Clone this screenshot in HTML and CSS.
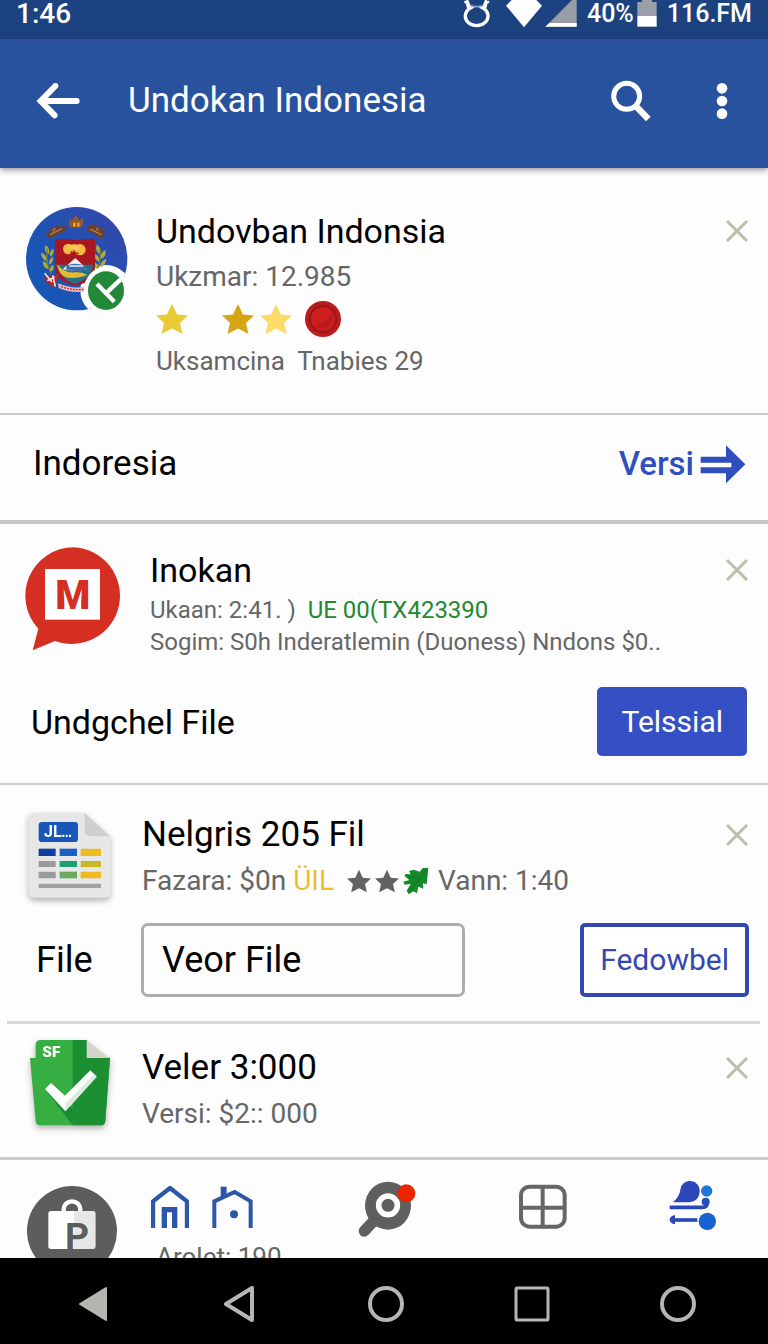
FILE: index.html
```html
<!DOCTYPE html>
<html lang="id">
<head>
    <meta charset="UTF-8">
    <meta name="viewport" content="width=device-width, initial-scale=1.0">
    <title>Undokan Indonesia</title>
    <link rel="stylesheet" href="styles.css">
</head>
<body>

    <svg width="0" height="0" class="defs" aria-hidden="true">
        <symbol id="star" viewBox="0 0 32 30">
            <path d="M16 0l5 10.500 11 1-8 7.500 2.500 11-10.500-5.500-10.500 5.500 2.500-11-8-7.500 11-1z"/>
        </symbol>
        <symbol id="close" viewBox="0 0 24 24">
            <path d="M2 2l20 20M22 2L2 22" fill="none" stroke="#bdbda9" stroke-width="3"/>
        </symbol>
    </svg>

    <div class="status-bar">
        <span class="clock">1:46</span>
        <div class="status-icons">
            <svg width="28" height="28" viewBox="76 0 84 84">
                <path d="M80 4l14 10-6-14M154 4l-14 10 6-14" fill="none" stroke="#fff" stroke-width="7"/>
                <path d="M92 14q25 12 50 0" fill="none" stroke="#8fa6cc" stroke-width="5"/>
                <path d="M90 12q0 10 8 12a34 29 0 1 0 38 0q8-2 8-12" fill="none" stroke="#fff" stroke-width="10"/>
            </svg>
            <svg width="36" height="28" viewBox="203 0 108 84"><path d="M220 0h74l17 17-54 65-54-65z" fill="#fff"/></svg>
            <svg width="32" height="28" viewBox="316 0 96 84">
                <path d="M411 0v80h-94l80-80z" fill="#989ca4"/>
                <path d="M329 69h82v11h-94z" fill="#fff"/>
            </svg>
            <span class="status-text">40%</span>
            <svg width="20" height="28" viewBox="594 0 60 84">
                <path d="M595 6h14V0h30v6h14v42h-58z" fill="#9a9ea8"/>
                <path d="M595 48h58v32h-58z" fill="#fff"/>
            </svg>
            <span class="status-text">116.FM</span>
        </div>
    </div>

    <header class="app-bar">
        <button class="icon-btn" aria-label="Back">
            <svg width="44" height="36" viewBox="110 244 132 108">
                <path d="M168 253l-44 45 42 43M124 298h108" fill="none" stroke="#fff" stroke-width="18" stroke-linecap="round"/>
            </svg>
        </button>
        <h1>Undokan Indonesia</h1>
        <button class="icon-btn" aria-label="Search">
            <svg width="40" height="42" viewBox="512 238 120 126">
                <circle cx="559" cy="287" r="39" fill="none" stroke="#fff" stroke-width="15"/>
                <path d="M584 314l40 41" stroke="#fff" stroke-width="19"/>
            </svg>
        </button>
        <button class="icon-btn" aria-label="More">
            <svg width="12" height="36" viewBox="828 240 36 108" fill="#fff">
                <circle cx="846" cy="256" r="16"/>
                <circle cx="846" cy="294" r="16"/>
                <circle cx="846" cy="332" r="16"/>
            </svg>
        </button>
    </header>

    <main>
        <section class="item item-profile">
            <svg class="media" width="102" height="104" viewBox="50 35 306 312">
                <defs>
                    <linearGradient id="sky" x1="0" y1="1" x2="1" y2="0">
                        <stop offset="0" stop-color="#1459b5"/>
                        <stop offset="0.500" stop-color="#1f52b4"/>
                        <stop offset="1" stop-color="#3b44a8"/>
                    </linearGradient>
                    <clipPath id="disc"><ellipse cx="202" cy="190" rx="152" ry="155"/></clipPath>
                </defs>
                <g clip-path="url(#disc)">
                    <rect x="50" y="35" width="306" height="312" fill="url(#sky)"/>
                    <circle cx="290" cy="286" r="77" fill="#fff"/>
                </g>
                <path d="M178 68l10 8 12-18 10 18 12-8-4 28h-36z" fill="#9b5a20"/>
                <path d="M192 82h6v12h-6zM204 82h6v12h-6z" fill="#f1b04a"/>
                <path d="M106 108l12 6 2-22 10 12 14-18 6 10 18-6 2 16-16 6-34 18z" fill="#6b3f2c"/>
                <path d="M122 118l36-18M130 108l8-10" stroke="#b98138" stroke-width="4"/>
                <path d="M293 108l-10 8-4-24-10 10-14-18-6 8-16-4-2 18 18 6 26 18z" fill="#6b3f2c"/>
                <path d="M276 118l-32-16M268 106l-8-8" stroke="#b98138" stroke-width="4"/>
                <g fill="#b3a83c">
                    <path d="M108 150q16 8 10 26-16-8-10-26zM96 172q18 6 16 26-18-8-16-26zM100 198q18 4 18 24-18-4-18-24zM132 160q4 18-10 24-4-16 10-24zM130 184q4 18-10 24-4-16 10-24zM132 208q4 18-10 22-4-14 10-22z"/>
                    <path d="M262 148q16 8 8 28-14-10-8-28zM288 164q4 20-14 28-4-18 14-28zM290 190q2 18-16 26-4-16 16-26zM258 176q14 8 12 24-16-6-12-24zM256 202q14 4 12 22-14-4-12-22z"/>
                </g>
                <path d="M114 160q-6 44 12 76M272 160q4 30-6 60" fill="none" stroke="#6f8438" stroke-width="4"/>
                <path d="M137 131q33 0 60 3 27-3 60-3v86q0 42-60 54-60-16-60-54z" fill="#a8161f"/>
                <path d="M140 208h112q-4 40-54 58-46-14-58-58z" fill="#23708a"/>
                <circle cx="177" cy="161" r="16" fill="#f5b944"/>
                <circle cx="212" cy="163" r="17" fill="#f5b944"/>
                <ellipse cx="195" cy="155" rx="16" ry="8" fill="#f8c857"/>
                <path d="M184 176q12-10 24 0M186 168q-4 10 10 10" stroke="#a8161f" stroke-width="4" fill="none"/>
                <path d="M160 222q16-14 38-34 20 18 34 34-36 8-72 0z" fill="#f4f2ef"/>
                <path d="M172 210q24-10 54 0l10 12q-36 10-66 0z" fill="#3b6dae"/>
                <path d="M180 212h42" stroke="#fff" stroke-width="4"/>
                <path d="M144 207q20 28 54 24 22-2 36 8-40 14-66 6-20-8-24-38z" fill="#e8ba32"/>
                <path d="M108 236q16 10 26 6l16-10-4 20-12 26-24-18z" fill="#b3242b"/>
                <path d="M106 234l22 26M114 256l22-10M130 240l8 34" stroke="#f3e8e8" stroke-width="5"/>
                <path d="M146 264q40 18 84 10v14q-46 6-82-10z" fill="#e7b4b8"/>
                <path d="M156 274q34 12 70 8" fill="none" stroke="#b3242b" stroke-width="4" stroke-dasharray="5 4"/>
                <ellipse cx="290" cy="286" rx="67" ry="72" fill="#fff"/>
                <ellipse cx="290" cy="286" rx="54" ry="58" fill="#23883a"/>
                <path d="M263 266l52 53M292 292l42-40" stroke="#fff" stroke-width="13"/>
            </svg>
            <div class="info">
                <h2>Undovban Indonsia</h2>
                <p>Ukzmar: 12.985</p>
                <div class="rating">
                    <svg class="first-star" width="32" height="30"><use href="#star" fill="#e9c935"/></svg>
                    <svg width="32" height="30"><use href="#star" fill="#d5a514"/></svg>
                    <svg width="32" height="30"><use href="#star" fill="#fbdc6b"/></svg>
                    <svg class="seal" width="36" height="36" viewBox="0 0 36 36">
                        <circle cx="18" cy="18" r="18" fill="#b81c1c"/>
                        <circle cx="18" cy="18" r="13" fill="#cb1f20" stroke="#9f1517" stroke-width="2"/>
                        <path d="M10 25A11 11 0 0 0 27 12q-5 9-17 13z" fill="#b91b1c"/>
                    </svg>
                </div>
                <p class="caption">Uksamcina&nbsp; Tnabies 29</p>
            </div>
            <button class="close" aria-label="Close"><svg width="24" height="24"><use href="#close"/></svg></button>
        </section>

        <section class="link-row">
            <h2>Indoresia</h2>
            <a href="#">Versi
                <svg width="46" height="38" viewBox="420 44 138 114">
                    <path d="M422 79h76V45l58 57-58 57v-30h-76v-18h92V97h-92z" fill="#2f4fc0"/>
                </svg>
            </a>
        </section>

        <section class="item item-message">
            <svg class="media" width="98" height="106" viewBox="72 48 294 318">
                <path d="M220 52a145 145 0 1 1-55 281l-67 28 17-65A145 145 0 0 1 220 52z" fill="#d42f22"/>
                <rect x="135" y="117" width="165" height="152" fill="#fff"/>
                <text x="218" y="238" class="mark-m" text-anchor="middle">M</text>
            </svg>
            <div class="info">
                <h2>Inokan</h2>
                <p class="small">Ukaan: 2:41. )&nbsp; <span class="green">UE 00(TX423390</span></p>
                <p class="small">Sogim: S0h Inderatlemin (Duoness) Nndons $0..</p>
            </div>
            <button class="close" aria-label="Close"><svg width="24" height="24"><use href="#close"/></svg></button>
            <div class="action-row">
                <h2>Undgchel File</h2>
                <button class="btn btn-filled">Telssial</button>
            </div>
        </section>

        <section class="item item-file">
            <svg class="media shadow" width="88" height="92" viewBox="84 60 264 276">
                <path d="M108 66h152l76 70v168q0 16-16 16H108q-16 0-16-16V82q0-16 16-16z" fill="#e7e7e8"/>
                <path d="M260 66l76 70h-60q-16 0-16-16z" fill="#cfcfcf"/>
                <rect x="122" y="93" width="118" height="60" rx="10" fill="#1857b8"/>
                <text x="138" y="139" class="mark-sheet">JL</text>
                <path d="M193 131h6v7h-6zM203 131h6v7h-6zM213 131h6v7h-6z" fill="#fff"/>
                <path d="M122 173h51v22h-51z" fill="#0c3f9f"/>
                <path d="M185 173h52v22h-52z" fill="#1c60c4"/>
                <path d="M248 173h61v22h-61zM248 242h61v20h-61z" fill="#eebb23"/>
                <path d="M122 210h51v18h-51zM122 242h51v20h-51z" fill="#9b9b9d"/>
                <path d="M185 210h52v18h-52z" fill="#1ca071"/>
                <path d="M185 242h52v20h-52z" fill="#68aa60"/>
                <path d="M248 210h61v18h-61z" fill="#cbb727"/>
                <path d="M122 278h187v13H122z" fill="#a2a2a2"/>
            </svg>
            <div class="info">
                <h2>Nelgris 205 Fil</h2>
                <div class="meta">
                    <p>Fazara: $0n <span class="yellow">ÜIL</span></p>
                    <div class="meta-icons">
                        <svg width="24" height="24"><use href="#star" fill="#626262"/></svg>
                        <svg width="24" height="24"><use href="#star" fill="#626262"/></svg>
                        <svg width="26" height="28" viewBox="194 16 78 84">
                            <path d="M270 19l-5 49-11-3 1 16-15-6-4 20-11-6-14 9-6-11 12-20-18 2-4-9 18-5-14-11 2-7 16 1-5-10 14-4 18 6 10-11z" fill="#158a2b"/>
                            <path d="M264 26L216 86M242 50l-32-6" stroke="#0f7423" stroke-width="3" fill="none"/>
                        </svg>
                    </div>
                    <p>Vann: 1:40</p>
                </div>
            </div>
            <button class="close" aria-label="Close"><svg width="24" height="24"><use href="#close"/></svg></button>
            <div class="field-row">
                <label for="file">File</label>
                <input type="text" id="file" name="file" value="Veor File">
                <button class="btn btn-outline">Fedowbel</button>
            </div>
        </section>

        <section class="item item-version">
            <svg class="media shadow" width="88" height="92" viewBox="84 108 264 276">
                <path d="M128 96h137l43 53h28l-14 189q-1 14-15 14H128q-14 0-15-14L96 150h17v-40q0-14 15-14z" fill="#37ae42"/>
                <path d="M224 96h41l43 53h28l-14 189q-1 14-15 14h-83z" fill="#1d8f33"/>
                <path d="M146 250l78 102V300z" fill="#1c8a32"/>
                <path d="M266 96l66 54h-66z" fill="#d5d3cd"/>
                <path d="M141 243l18-18 42 38 76-76 19 19-94 104z" fill="#fff"/>
                <path d="M203 286l86-88 7 8-94 104z" fill="#dcebdd"/>
                <text x="133" y="147" class="mark-sf">SF</text>
            </svg>
            <div class="info">
                <h2>Veler 3:000</h2>
                <p>Versi: $2:: 000</p>
            </div>
            <button class="close" aria-label="Close"><svg width="24" height="24"><use href="#close"/></svg></button>
        </section>
    </main>

    <nav class="tabs">
        <svg class="bag" width="90" height="90" viewBox="80 528 270 270">
            <circle cx="215" cy="663" r="135" fill="#5d5d5d"/>
            <path d="M190 606v-8a25 24 0 0 1 50 0v8" fill="none" stroke="#fff" stroke-width="13"/>
            <rect x="144" y="603" width="141" height="114" rx="8" fill="#fff"/>
            <path d="M221 603h56q8 0 8 8v98q0 8-8 8h-56z" fill="#e7e7e7"/>
            <text x="194" y="716" class="mark-p">P</text>
        </svg>
        <div class="home">
            <div class="home-icons">
                <a href="#" aria-label="Home">
                    <svg width="38" height="42" viewBox="453 530 114 126" fill="none" stroke="#2c56a8" stroke-width="13">
                        <path d="M459 656v-80l51-40 51 40v80"/>
                        <path d="M493 656v-55h31v55" stroke-width="16"/>
                    </svg>
                </a>
                <a href="#" aria-label="House">
                    <svg width="42" height="42" viewBox="636 530 126 126" fill="none" stroke="#2c56a8" stroke-width="12">
                        <path d="M643 656v-80l61-28 48 28v80"/>
                        <path d="M671 532v28" stroke-width="18"/>
                        <circle cx="702" cy="615" r="12" fill="#2c56a8" stroke="none"/>
                    </svg>
                </a>
            </div>
            <p class="caption">Arolet: 190</p>
        </div>
        <div class="tab-icons">
            <a href="#" aria-label="Find">
                <svg width="58" height="58" viewBox="53 94 174 174">
                    <path d="M100 214l-28 30" stroke="#5f5f5f" stroke-width="34" stroke-linecap="round"/>
                    <ellipse cx="143" cy="168" rx="69" ry="72" fill="#5f5f5f"/>
                    <circle cx="143" cy="167" r="28" fill="#5f5f5f" stroke="#fff" stroke-width="17"/>
                    <circle cx="198" cy="131" r="27" fill="#ea2500"/>
                </svg>
            </a>
            <a href="#" aria-label="Grid">
                <svg width="48" height="50" viewBox="531 94 144 150" fill="none" stroke="#666" stroke-width="12">
                    <rect x="537" y="111" width="131" height="120" rx="26"/>
                    <path d="M602 111v120M537 174h131"/>
                </svg>
            </a>
            <a href="#" aria-label="Account">
                <svg width="48" height="50" viewBox="988 94 144 150">
                    <path d="M1000 158q20-18 22-38a29 29 0 1 1 58 6q-2 32-40 32z" fill="#2b47b8"/>
                    <circle cx="1101" cy="124" r="17" fill="#1d78d8"/>
                    <path d="M990 173h98q14 0 14-10" fill="none" stroke="#2b47b8" stroke-width="11"/>
                    <circle cx="1098" cy="156" r="12" fill="#2450bc"/>
                    <path d="M1000 211h73" stroke="#2b47b8" stroke-width="11"/>
                    <path d="M1006 196v28q-16-4-16-14t16-14z" fill="#2b47b8"/>
                    <circle cx="1103" cy="215" r="26" fill="#1762d2"/>
                </svg>
            </a>
        </div>
    </nav>

    <footer class="system-nav">
        <button class="icon-btn" aria-label="Previous">
            <svg width="36" height="36" viewBox="0 0 36 36"><path d="M5 18L31 2v32z" fill="#b7b5b2" stroke="#b7b5b2" stroke-width="2" stroke-linejoin="round"/></svg>
        </button>
        <button class="icon-btn" aria-label="Back">
            <svg width="36" height="36" viewBox="0 0 36 36"><path d="M5 18L31 2v32z" fill="none" stroke="#b7b5b2" stroke-width="4" stroke-linejoin="round"/></svg>
        </button>
        <button class="icon-btn" aria-label="Home">
            <svg width="36" height="36" viewBox="0 0 36 36"><circle cx="18" cy="18" r="16" fill="none" stroke="#b7b5b2" stroke-width="4"/></svg>
        </button>
        <button class="icon-btn" aria-label="Recent">
            <svg width="36" height="36" viewBox="0 0 36 36"><rect x="2" y="2" width="32" height="32" rx="1" fill="none" stroke="#b7b5b2" stroke-width="3"/></svg>
        </button>
        <button class="icon-btn" aria-label="Assistant">
            <svg width="36" height="36" viewBox="0 0 36 36"><circle cx="18" cy="18" r="16" fill="none" stroke="#b7b5b2" stroke-width="4"/></svg>
        </button>
    </footer>

</body>
</html>
```

FILE: styles.css
```css
* {
    box-sizing: border-box;
}
body {
    font-family: Roboto, 'Liberation Sans', sans-serif;
    background: #fdfdfd;
    color: #000;
    display: flex;
    flex-direction: column;
    height: 100vh;
    margin: 0;
}
h1, h2, p {
    margin: 0;
    font-weight: 400;
}
h2 {
    font-size: 34px;
    line-height: 48px;
}
p {
    font-size: 28px;
    line-height: 44px;
    color: #666;
}
svg {
    display: block;
    flex: none;
}
.defs {
    position: absolute;
}
.icon-btn, .close {
    background: none;
    border: none;
    padding: 0;
    cursor: pointer;
}

/* top bars */
.status-bar {
    display: flex;
    justify-content: space-between;
    flex: none;
    padding: 0 16px 11px;
    background: #1c437f;
    color: #fff;
    font-weight: 500;
    line-height: 28px;
}
.clock {
    font-size: 28px;
}
.status-text {
    font-size: 25px;
    padding-left: 7px;
}
.status-icons {
    display: flex;
    gap: 3px;
}
.status-icons svg:first-child {
    margin-right: 12px;
}
.app-bar {
    display: flex;
    align-items: center;
    flex: none;
    padding: 38px 40px 43px 36px;
    background: #28529d;
    color: #fff;
    box-shadow: 0 2px 6px rgba(60, 40, 60, 0.5);
}
.app-bar h1 {
    flex: 1;
    margin-left: 48px;
    font-size: 35px;
    line-height: 48px;
}
.app-bar .icon-btn:last-child {
    margin-left: 65px;
}

/* list */
main {
    flex: none;
}
.item {
    display: flex;
    flex-wrap: wrap;
    align-items: flex-start;
    padding: 0 19px 0 26px;
}
.item-profile {
    padding-top: 39px;
    padding-bottom: 30px;
    border-bottom: 2px solid #c9c9c9;
}
.item-message {
    padding-top: 22px;
    padding-bottom: 27px;
    padding-left: 24px;
    border-bottom: 2px solid #cfcfcf;
}
.item-file {
    padding-top: 26px;
}
.item-file::after {
    content: "";
    flex: 0 0 calc(100% + 30px);
    height: 3px;
    margin: 24px -11px 0 -19px;
    background: #d8d8d5;
}
.item-version {
    padding-top: 20px;
    padding-bottom: 21px;
    border-bottom: 3px solid #cbcbcb;
}
.item-file h2, .item-version h2, .link-row h2 {
    font-size: 35px;
}
.media {
    overflow: visible;
    margin-right: 28px;
}
.shadow {
    filter: drop-shadow(0 3px 3px rgba(0, 0, 0, 0.3));
}
.info {
    flex: 1;
    min-width: 0;
}
.close {
    display: flex;
    align-items: center;
    height: 48px;
}
.caption {
    font-size: 26px;
}
.small {
    font-size: 24px;
    line-height: 32px;
    white-space: nowrap;
}
.green {
    color: #23882f;
}
.yellow {
    color: #e9c02c;
}
.rating {
    display: flex;
    align-items: center;
    gap: 6px;
    height: 40px;
}
.first-star {
    margin-right: 28px;
}
.seal {
    margin-left: 7px;
}
.meta, .meta-icons {
    display: flex;
    align-items: center;
    gap: 4px;
}
.meta {
    gap: 9px;
    white-space: nowrap;
}
.meta-icons {
    margin-left: 4px;
}

.link-row {
    display: flex;
    justify-content: space-between;
    align-items: center;
    padding: 25px 22px 32px 33px;
    border-bottom: 4px solid #c6c6c6;
}
.link-row a {
    display: flex;
    align-items: center;
    gap: 6px;
    color: #2f4fc0;
    font-size: 33px;
    font-weight: 500;
    line-height: 48px;
    text-decoration: none;
}

.action-row, .field-row {
    display: flex;
    align-items: center;
    flex: 0 0 100%;
    min-width: 0;
}
.action-row {
    justify-content: space-between;
    margin-top: 29px;
    padding: 0 2px 0 7px;
}
.field-row {
    margin-top: 20px;
}
.btn {
    border: none;
    border-radius: 5px;
    font-family: inherit;
    font-size: 30px;
    cursor: pointer;
}
.btn-filled {
    padding: 17px 24px;
    background: #3450c4;
    color: #fff;
    line-height: 35px;
}
.btn-outline {
    margin-left: 115px;
    padding: 17px 16px;
    border: 4px solid #3348b0;
    background: #fff;
    color: #3348b0;
    line-height: 32px;
}
.field-row label {
    width: 106px;
    padding-left: 10px;
    font-size: 36px;
}
.field-row input {
    flex: 1;
    min-width: 0;
    height: 74px;
    margin-left: 9px;
    padding: 0 18px;
    border: 3px solid #adadad;
    border-radius: 7px;
    background: #fdfdfd;
    color: #000;
    font-family: inherit;
    font-size: 36px;
}

/* lettering inside the app icons */
.mark-m {
    font-size: 120px;
    font-weight: 900;
    fill: #d42f22;
}
.mark-sheet {
    font-size: 48px;
    font-weight: 700;
    fill: #fff;
}
.mark-sf {
    font-size: 46px;
    font-weight: 900;
    fill: #fff;
}
.mark-p {
    font-size: 112px;
    font-weight: 700;
    fill: #5d5d5d;
}

/* bottom tabs, cut off by the system bar */
.tabs {
    display: flex;
    align-items: flex-start;
    flex: 1;
    min-height: 0;
    overflow: hidden;
    padding: 21px 51px 0 27px;
}
.bag, .home {
    margin-top: 5px;
}
.home {
    width: 134px;
    margin-left: 34px;
    margin-right: 73px;
    flex: none;
}
.home-icons {
    display: flex;
    gap: 23px;
}
.home .caption {
    padding: 7px 0 0 5px;
    white-space: nowrap;
}
.tab-icons {
    display: flex;
    justify-content: space-between;
    flex: 1;
}
.system-nav {
    display: flex;
    justify-content: space-between;
    flex: none;
    padding: 28px 72px 22px 75px;
    background: #000;
}
```
